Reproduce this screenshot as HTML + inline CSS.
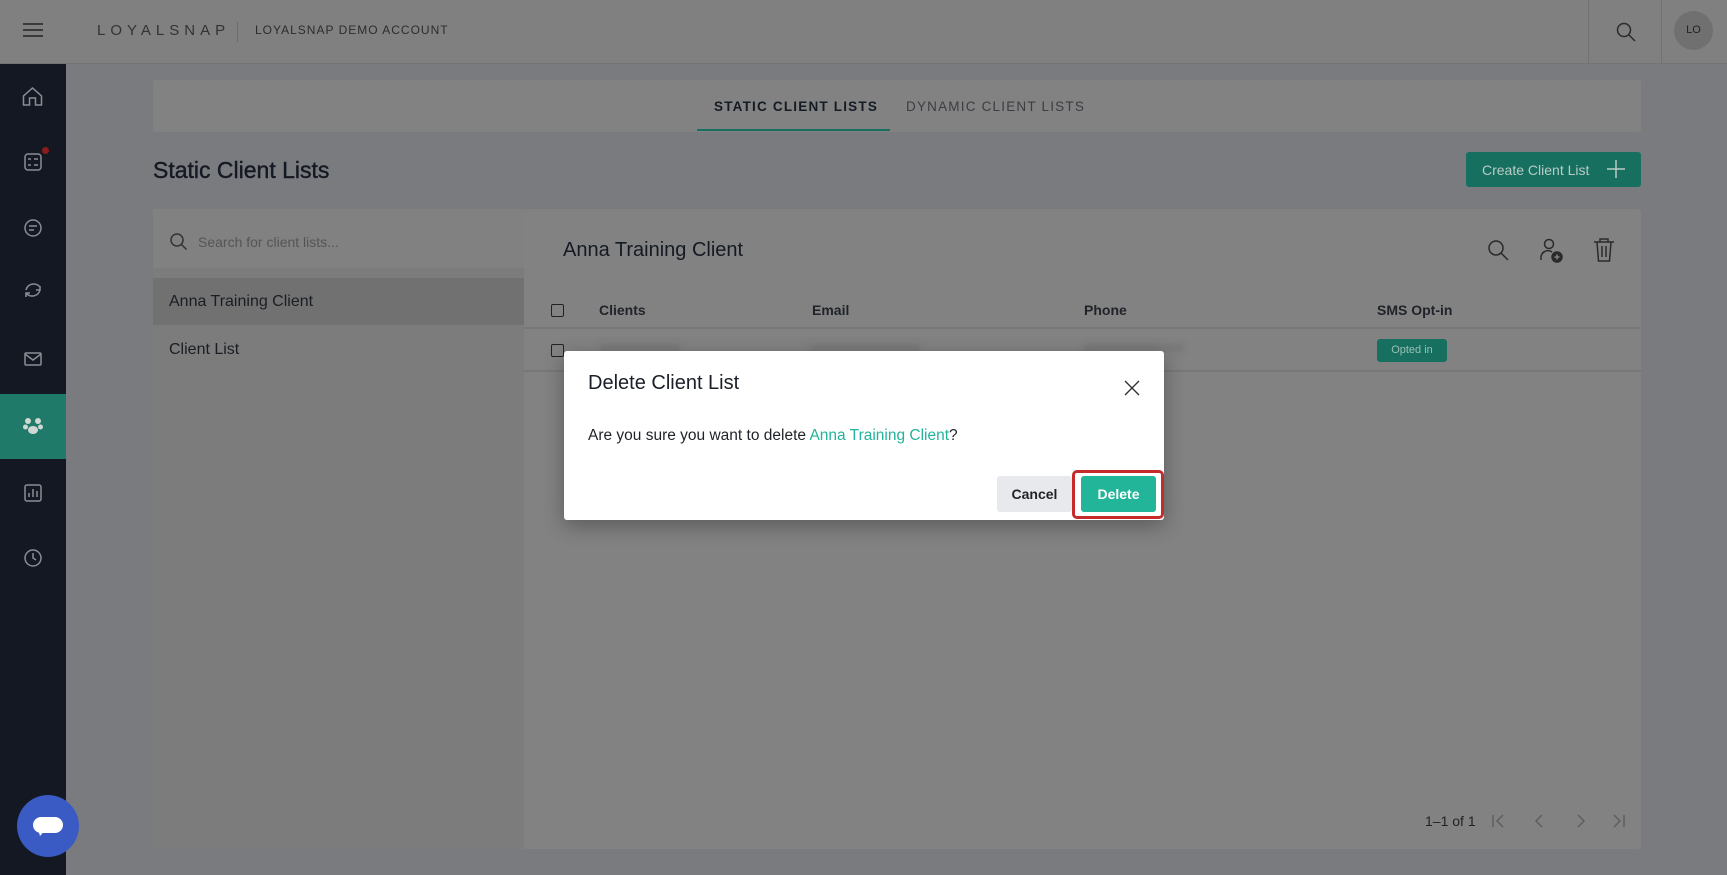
<!DOCTYPE html>
<html><head><meta charset="utf-8"><style>
*{box-sizing:border-box;margin:0;padding:0}
body{width:1727px;height:875px;overflow:hidden;font-family:"Liberation Sans",Arial,sans-serif;background:#7a7b7e;position:relative}
.abs{position:absolute}
.hdr{left:0;top:0;width:1727px;height:64px;background:#808080;border-bottom:1px solid #747474}
.side{left:0;top:64px;width:66px;height:811px;background:#141823}
.card{background:#828282;border-radius:3px}
svg{position:absolute}
.t{position:absolute;white-space:nowrap}
</style></head><body>
<div class="abs hdr"></div>
<svg style="left:22px;top:21px" width="22" height="18"><path d="M1 3h20M1 9h20M1 15h20" stroke="#222" stroke-width="1.6"/></svg>
<div class="t" style="left:97px;top:22px;font-size:15px;letter-spacing:5px;color:#333">LOYALSNAP</div>
<div class="abs" style="left:237px;top:22px;width:1px;height:20px;background:#6d6d6d"></div>
<div class="t" style="left:255px;top:23px;font-size:12px;letter-spacing:1px;color:#2c2c2c">LOYALSNAP DEMO ACCOUNT</div>
<div class="abs" style="left:1588px;top:0;width:1px;height:64px;background:#727272"></div>
<div class="abs" style="left:1661px;top:0;width:1px;height:64px;background:#727272"></div>
<svg style="left:1615px;top:21px" width="22" height="22"><circle cx="9" cy="9" r="6.5" fill="none" stroke="#2a2a2a" stroke-width="1.5"/><path d="M14 14l6 6" stroke="#2a2a2a" stroke-width="1.5"/></svg>
<div class="abs" style="left:1674px;top:11px;width:39px;height:39px;border-radius:50%;background:#707070;color:#222;font-size:11px;text-align:center;line-height:39px">LO</div>

<div class="abs side"></div>
<div class="abs" style="left:0;top:394px;width:66px;height:65px;background:#1f7a69"></div>
<svg style="left:0;top:64px" width="66" height="560" fill="none" stroke="#8a8d93" stroke-width="1.5">
<path d="M24 38v-9l9-8 9 8v9h-6v-7h-6v7z" transform="translate(-0.5,3)"/>
<rect x="25" y="90" width="16" height="16" rx="3"/><path d="M28 95h3M34 95h4M28 101h3M34 101h4"/>
<circle cx="33" cy="164" r="8"/><path d="M29 162h8M29 166h5"/>
<path d="M40 226a8 8 0 0 1-14 3M26 226a8 8 0 0 1 14-3M40 222v4h-4M26 233v-4h4"/>
<rect x="25" y="289" width="16" height="12" rx="1"/><path d="M25 290l8 6 8-6"/>
<rect x="25" y="421" width="16" height="16" rx="2"/><path d="M29 433v-4M33 433v-8M37 433v-6"/>
<circle cx="33" cy="494" r="8"/><path d="M33 489v5l3 2"/>
</svg>
<div class="abs" style="left:42px;top:147px;width:7px;height:7px;border-radius:50%;background:#8a1c1c"></div>
<svg style="left:22px;top:415px" width="22" height="22" fill="#cfd8d5"><circle cx="6" cy="6" r="3"/><circle cx="16" cy="6" r="3"/><circle cx="3.5" cy="12" r="2.5"/><circle cx="18.5" cy="12" r="2.5"/><ellipse cx="11" cy="15" rx="5" ry="4"/></svg>
<div class="abs" style="left:17px;top:795px;width:62px;height:62px;border-radius:50%;background:#3a5ac4"></div>
<div class="abs" style="left:33px;top:817px;width:30px;height:16px;border-radius:8px;background:#fff"></div>
<svg style="left:38px;top:829px" width="10" height="8"><path d="M0 0h8l-6 7z" fill="#fff"/></svg>

<div class="abs card" style="left:153px;top:80px;width:1488px;height:52px"></div>
<div class="t" style="left:714px;top:99px;font-size:13.5px;font-weight:bold;letter-spacing:1.2px;color:#151b24">STATIC CLIENT LISTS</div>
<div class="t" style="left:906px;top:99px;font-size:13.5px;letter-spacing:1.2px;color:#3a3d42">DYNAMIC CLIENT LISTS</div>
<div class="abs" style="left:697px;top:129px;width:193px;height:2px;background:#17705f"></div>
<div class="t" style="left:153px;top:157px;font-size:23px;color:#141923;-webkit-text-stroke:0.4px #141923">Static Client Lists</div>
<div class="abs" style="left:1466px;top:152px;width:175px;height:35px;background:#17705f;border-radius:3px"></div>
<div class="t" style="left:1482px;top:162px;font-size:14px;color:#b9cbc6">Create Client List</div>
<svg style="left:1607px;top:160px" width="18" height="18"><path d="M9 0v18M0 9h18" stroke="#b9cbc6" stroke-width="1.5"/></svg>

<div class="abs card" style="left:153px;top:209px;width:371px;height:640px;background:#7c7c7d"></div>
<div class="abs" style="left:153px;top:209px;width:371px;height:59px;background:#818181"></div>
<svg style="left:169px;top:232px" width="20" height="20"><circle cx="8" cy="8" r="6" fill="none" stroke="#333" stroke-width="1.5"/><path d="M12.5 12.5l5 5" stroke="#333" stroke-width="1.5"/></svg>
<div class="t" style="left:198px;top:234px;font-size:14px;color:#555">Search for client lists...</div>
<div class="abs" style="left:153px;top:278px;width:371px;height:47px;background:#717172"></div>
<div class="t" style="left:169px;top:293px;font-size:16px;color:#1a1d23">Anna Training Client</div>
<div class="t" style="left:169px;top:341px;font-size:16px;color:#1a1d23">Client List</div>

<div class="abs card" style="left:524px;top:209px;width:1117px;height:640px"></div>
<div class="t" style="left:563px;top:239px;font-size:20px;color:#141923">Anna Training Client</div>
<svg style="left:1486px;top:238px" width="24" height="24"><circle cx="10" cy="10" r="7" fill="none" stroke="#2a2a2a" stroke-width="1.5"/><path d="M15 15l7 7" stroke="#2a2a2a" stroke-width="1.5"/></svg>
<svg style="left:1538px;top:237px" width="28" height="28" fill="none" stroke="#2a2a2a" stroke-width="1.5"><circle cx="11" cy="7" r="4.5"/><path d="M3 23v-3a7 7 0 0 1 11-5"/><circle cx="19" cy="20" r="5" fill="#2a2a2a"/><path d="M19 17.5v5M16.5 20h5" stroke="#828282"/></svg>
<svg style="left:1592px;top:237px" width="24" height="26" fill="none" stroke="#2a2a2a" stroke-width="1.5"><path d="M2 5h20M8 5V2h8v3M5 5l1.5 19h11L19 5M10 9v11M14 9v11"/></svg>
<div class="abs" style="left:551px;top:304px;width:13px;height:13px;border:1.5px solid #222;border-radius:2px"></div>
<div class="t" style="left:599px;top:302px;font-size:14px;font-weight:bold;color:#1f2329">Clients</div>
<div class="t" style="left:812px;top:302px;font-size:14px;font-weight:bold;color:#1f2329">Email</div>
<div class="t" style="left:1084px;top:302px;font-size:14px;font-weight:bold;color:#1f2329">Phone</div>
<div class="t" style="left:1377px;top:302px;font-size:14px;font-weight:bold;color:#1f2329">SMS Opt-in</div>
<div class="abs" style="left:524px;top:327px;width:1117px;height:2px;background:#777"></div>
<div class="abs" style="left:551px;top:344px;width:13px;height:13px;border:1.5px solid #222;border-radius:2px"></div>
<div class="abs" style="left:600px;top:344px;width:80px;height:8px;background:#787878;filter:blur(3px)"></div>
<div class="abs" style="left:810px;top:344px;width:110px;height:8px;background:#787878;filter:blur(3px)"></div>
<div class="abs" style="left:1084px;top:344px;width:100px;height:8px;background:#787878;filter:blur(3px)"></div>
<div class="abs" style="left:1377px;top:339px;width:70px;height:23px;background:#17705f;border-radius:3px;color:#9cbfb6;font-size:11px;text-align:center;line-height:23px">Opted in</div>
<div class="abs" style="left:524px;top:370px;width:1117px;height:2px;background:#777"></div>
<div class="t" style="left:1425px;top:813px;font-size:14px;color:#222">1–1 of 1</div>
<svg style="left:1490px;top:811px" width="140" height="20" fill="none" stroke="#5e5e5e" stroke-width="1.5"><path d="M3 4v12M13 4l-6 6 6 6M52 4l-6 6 6 6M88 4l6 6-6 6M124 4l6 6-6 6M134 4v12"/></svg>

<div class="abs" style="left:564px;top:351px;width:600px;height:169px;background:#fff;border-radius:3px;box-shadow:0 6px 20px rgba(0,0,0,.3)"></div>
<div class="t" style="left:588px;top:372px;font-size:20px;color:#1b1f27">Delete Client List</div>
<svg style="left:1124px;top:380px" width="16" height="16"><path d="M1 1l14 14M15 1L1 15" stroke="#333" stroke-width="1.4"/></svg>
<div class="t" style="left:588px;top:427px;font-size:15.5px;color:#1f2329">Are you sure you want to delete <span style="color:#22b39a">Anna Training Client</span>?</div>
<div class="abs" style="left:997px;top:476px;width:75px;height:36px;background:#e8e9ec;border-radius:3px;color:#1f2329;font-size:14px;font-weight:bold;text-align:center;line-height:36px">Cancel</div>
<div class="abs" style="left:1072px;top:470px;width:92px;height:49px;border:3px solid #c62b2b;border-radius:5px"></div>
<div class="abs" style="left:1081px;top:476px;width:75px;height:36px;background:#22b59a;border-radius:3px;color:#fff;font-size:14px;font-weight:bold;text-align:center;line-height:36px">Delete</div>
</body></html>
